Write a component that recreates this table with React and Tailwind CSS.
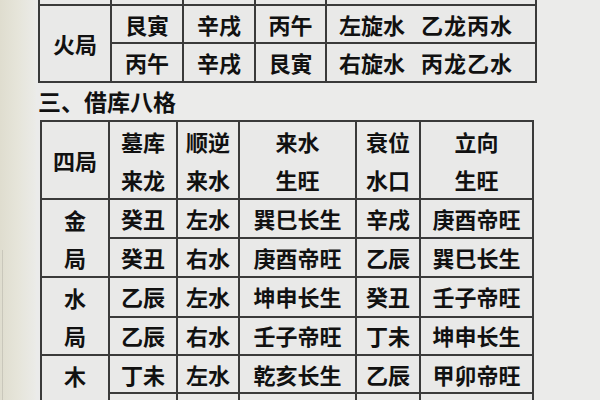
import React from "react";

const cell = "border-2 border-[#3a3a3a] p-0 text-center align-middle";
const font = { fontFamily: '"Noto Sans CJK SC", "Noto Sans", sans-serif' };

function Two({ a, b }) {
  return (
    <div className="flex flex-col items-center leading-[38px]">
      <span>{a}</span>
      <span>{b}</span>
    </div>
  );
}

const rows = [
  ["金", "癸丑", "左水", "巽巳长生", "辛戌", "庚酉帝旺"],
  ["局", "癸丑", "右水", "庚酉帝旺", "乙辰", "巽巳长生"],
  ["水", "乙辰", "左水", "坤申长生", "癸丑", "壬子帝旺"],
  ["局", "乙辰", "右水", "壬子帝旺", "丁未", "坤申长生"],
  ["木", "丁未", "左水", "乾亥长生", "乙辰", "甲卯帝旺"],
  ["局", "丁未", "右水", "甲卯帝旺", "辛戌", "乾亥长生"],
];
const heights = ["h-[38px]", "h-[38px]", "h-[39px]", "h-[38px]", "h-[38px]", "h-[39px]"];

export default function App() {
  return (
    <div
      className="relative w-[600px] h-[400px] overflow-hidden bg-[#ebebea] text-[#111] text-[22px] font-bold"
      style={font}
    >
      <div className="absolute inset-y-0 left-0 w-[36px] bg-gradient-to-r from-[#dfddcf] via-[#e6e5da] to-[#ebebe8]" />
      <div className="absolute left-[2px] top-[250px] bottom-0 w-px bg-[#c9c7bb]" />
      <div className="relative pl-[38px]">
        <table className="table-fixed border-collapse bg-[#e9e9e8] w-[497px]">
          <colgroup>
            <col className="w-[72px]" />
            <col className="w-[72px]" />
            <col className="w-[72px]" />
            <col className="w-[71px]" />
            <col className="w-[210px]" />
          </colgroup>
          <tbody>
            <tr className="h-[5px]">
              <td className={cell + " border-t-0"} />
              <td className={cell + " border-t-0"} />
              <td className={cell + " border-t-0"} />
              <td className={cell + " border-t-0"} />
              <td className={cell + " border-t-0"} />
            </tr>
            <tr className="h-[38px]">
              <td className={cell} rowSpan={2}>火局</td>
              <td className={cell}>艮寅</td>
              <td className={cell}>辛戌</td>
              <td className={cell}>丙午</td>
              <td className={cell + " text-left pl-[12px]"}>
                <span className="inline-flex gap-[16px]">
                  <span>左旋水</span>
                  <span className="tracking-[1px]">乙龙丙水</span>
                </span>
              </td>
            </tr>
            <tr className="h-[39px]">
              <td className={cell}>丙午</td>
              <td className={cell}>辛戌</td>
              <td className={cell}>艮寅</td>
              <td className={cell + " text-left pl-[12px]"}>
                <span className="inline-flex gap-[16px]">
                  <span>右旋水</span>
                  <span className="tracking-[1px]">丙龙乙水</span>
                </span>
              </td>
            </tr>
          </tbody>
        </table>

        <div className="h-[37px] flex items-center text-[23px] leading-none">三、借库八格</div>

        <table className="ml-[2px] table-fixed border-collapse bg-[#e9e9e8] w-[492px]">
          <colgroup>
            <col className="w-[68px]" />
            <col className="w-[68px]" />
            <col className="w-[62px]" />
            <col className="w-[117px]" />
            <col className="w-[64px]" />
            <col className="w-[113px]" />
          </colgroup>
          <tbody>
            <tr className="h-[77px]">
              <td className={cell}>四局</td>
              <td className={cell}><Two a="墓库" b="来龙" /></td>
              <td className={cell}><Two a="顺逆" b="来水" /></td>
              <td className={cell}><Two a="来水" b="生旺" /></td>
              <td className={cell}><Two a="衰位" b="水口" /></td>
              <td className={cell}><Two a="立向" b="生旺" /></td>
            </tr>
            {rows.map((r, i) => (
              <tr key={i} className={heights[i]}>
                {i % 2 === 0 && (
                  <td className={cell} rowSpan={2}>
                    <Two a={r[0]} b={rows[i + 1][0]} />
                  </td>
                )}
                <td className={cell}>{r[1]}</td>
                <td className={cell}>{r[2]}</td>
                <td className={cell}>{r[3]}</td>
                <td className={cell}>{r[4]}</td>
                <td className={cell}>{r[5]}</td>
              </tr>
            ))}
          </tbody>
        </table>
      </div>
    </div>
  );
}
